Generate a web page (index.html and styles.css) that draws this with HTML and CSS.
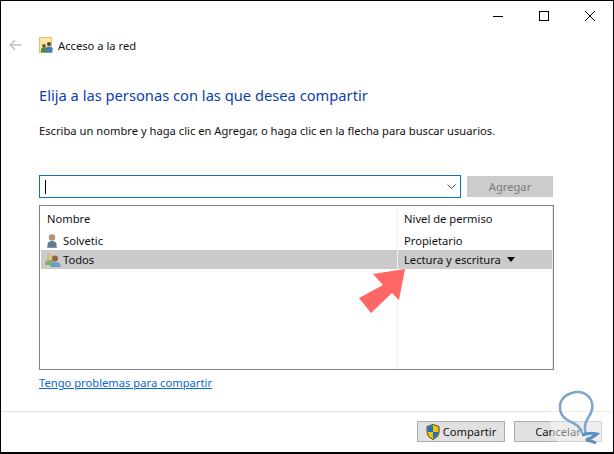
FILE: index.html
```html
<!DOCTYPE html>
<html lang="es">
<head>
<meta charset="utf-8">
<title>Acceso a la red</title>
<link rel="stylesheet" href="styles.css">
</head>
<body>
<div class="window">
  <div class="titlebar">
    <svg class="cap" width="12" height="12" viewBox="0 0 12 12"><path d="M1 6.500h10" stroke="#000" fill="none"/></svg>
    <svg class="cap" width="12" height="12" viewBox="0 0 12 12"><rect x="1.500" y="1.500" width="9" height="9" stroke="#000" fill="none"/></svg>
    <svg class="cap" width="12" height="12" viewBox="0 0 12 12"><path d="M1 1l10 10M11 1L1 11" stroke="#000" fill="none"/></svg>
  </div>
  <div class="nav">
    <svg class="back" width="13" height="12" viewBox="0 0 13 12"><path d="M12.500 6H1.500M6 1.200L1.200 6 6 10.800" stroke="#c4c4c4" stroke-width="1.600" fill="none"/></svg>
    <svg class="appicon" width="14" height="16" viewBox="0 0 14 16">
      <rect x=".5" y=".5" width="12" height="15" fill="#fbe8a6" stroke="#dcc074"/>
      <circle cx="5" cy="9" r="2" fill="#7a5a3a"/><path d="M2 15.500v-3q0-2 3-2t3 2v3z" fill="#4f8a4c"/>
      <circle cx="10" cy="7" r="2" fill="#5a3f2a"/><path d="M7 15.500v-4q0-2 3-2t3.500 2v4z" fill="#3f7fbf"/>
    </svg>
    <span class="navtitle">Acceso a la red</span>
  </div>
  <main class="content">
    <h1 class="heading">Elija a las personas con las que desea compartir</h1>
    <p class="intro">Escriba un nombre y haga clic en Agregar, o haga clic en la flecha para buscar usuarios.</p>
    <div class="addrow">
      <div class="combo">
        <span class="caret"></span>
        <svg class="chev" width="9" height="5" viewBox="0 0 9 5"><path d="M.5.500L4.500 4.500l4-4" stroke="#555" fill="none"/></svg>
      </div>
      <div class="addbtn">Agregar</div>
    </div>
    <div class="table">
      <div class="row head"><div class="c1">Nombre</div><div class="c2">Nivel de permiso</div></div>
      <div class="row user"><div class="c1">
        <svg class="uicon" width="14" height="16" viewBox="0 0 14 16"><circle cx="7" cy="4.500" r="3.200" fill="#b98f6c"/><path d="M2.500 14.500v-3q0-3.500 4.500-3.500t4.500 3.500v3z" fill="#5f7c96"/><path d="M2 14.500h10" stroke="#8f8f8f"/></svg>Solvetic</div><div class="c2">Propietario</div></div>
      <div class="row user sel"><div class="c1">
        <svg class="uicon wide" width="17" height="16" viewBox="0 0 17 16"><circle cx="5.500" cy="5" r="3.200" fill="#d9c08a"/><path d="M1 13v-2q0-3 4.500-3t4.500 3v2z" fill="#7fb06a"/><circle cx="11" cy="6.500" r="3" fill="#8f6448"/><path d="M6.500 15v-2q0-3 4.500-3t5.500 3v2z" fill="#6f9cc4"/></svg>Todos</div><div class="c2">Lectura y escritura<span class="tri"></span></div></div>
    </div>
    <a class="link" href="#">Tengo problemas para compartir</a>
  </main>
  <footer class="footer">
    <div class="btn share">
      <svg width="14" height="16" viewBox="0 0 14 16"><path d="M7 .5l6 2v6q0 4.500-6 7-6-2.500-6-7v-6z" fill="#f5c400" stroke="#444"/><path d="M7 1.500v6.500H1.700V3zM7 8h5.300q-.5 4-5.300 6.500z" fill="#1f6fc4"/></svg>
      Compartir
    </div>
    <div class="btn">Cancelar</div>
  </footer>
  <svg class="arrow" width="50" height="48" viewBox="0 0 50 48"><path d="M49 3L43 34 36 27 15 47 3 32 27 19 17 8z" fill="#ff6666"/></svg>
  <svg class="mark" width="64" height="70" viewBox="0 0 64 70"><circle cx="35" cy="32" r="35" fill="#fff" opacity=".45"/><path d="M36 46Q33 38 38 30 45 20 41 12 36 3 26 4 12 6 10 17 9 28 19 33 30 37 32 45" stroke="#7ea6cc" stroke-width="2.500" fill="none"/><path d="M32 47Q40 44 47 46 42 50 36 52 42 53 46 55" stroke="#5b8fc0" stroke-width="3" fill="none"/></svg>
</div>
</body>
</html>
```

FILE: styles.css
```css
* { box-sizing: border-box; }
html, body { margin: 0; padding: 0; }
body { width: 614px; height: 454px; overflow: hidden; background: #fff; font-family: "Noto Sans", "Open Sans", sans-serif; font-size: 11.2px; color: #111; }
.window { position: relative; width: 614px; height: 454px; border: 1px solid #000; border-width: 1px 1px 2px 1px; display: flex; flex-direction: column; background: #fff; overflow: hidden; }
.titlebar { height: 29px; display: flex; justify-content: flex-end; align-items: center; gap: 34px; padding: 0 17px 0 0; flex: none; }
.cap { display: block; }
.nav { height: 30px; display: flex; align-items: center; padding-left: 8px; flex: none; }
.back { margin-right: 17px; }
.appicon { margin-right: 5px; }
.content { flex: 1; padding: 0 59px 0 38px; display: flex; flex-direction: column; }
.heading { margin: 24px 0 0; font-weight: 400; font-size: 14.7px; line-height: 22px; color: #0a3fb0; }
.intro { margin: 17px 0 0; line-height: 16px; }
.addrow { display: flex; gap: 6px; margin-top: 36px; }
.combo { width: 422px; height: 23px; border: 1px solid #0f72bd; display: flex; align-items: center; justify-content: space-between; padding: 0 4px 0 5px; }
.caret { width: 1px; height: 14px; background: #000; }
.chev { display: block; }
.addbtn { width: 86px; height: 21px; margin-top: 1px; background: #ccc; color: #7b7b7b; display: flex; align-items: center; justify-content: center; }
.table { position: relative; margin-top: 7px; height: 165px; border: 1px solid #808088; padding: 1px 0 0 1px; }
.table::after { content: ""; position: absolute; top: 0; bottom: 0; left: 357px; width: 1px; background: #eef0f3; }
.table::before { content: ""; position: absolute; top: 0; bottom: 0; right: 0; width: 1px; background: #e9e9e9; }
.row { display: flex; height: 19px; align-items: center; }
.head { height: 22px; margin-bottom: 2px; }
.c1 { width: 356px; height: 100%; display: flex; align-items: center; padding-left: 6px; }
.c2 { height: 100%; display: flex; align-items: center; padding-left: 7px; }
.user .c1 { padding-left: 4px; }
.sel { background: #cbcbcb; width: 511px; }
.uicon { margin-right: 4px; }
.uicon.wide { margin-left: -1px; margin-right: 2px; }
.tri { width: 0; height: 0; margin-left: 6px; border: 4.500px solid transparent; border-top: 5px solid #000; border-bottom: 0; }
.link { margin-top: 5px; line-height: 16px; color: #0a66d6; align-self: flex-start; }
.footer { height: 41px; flex: none; border-top: 1px solid #dfdfdf; display: flex; justify-content: flex-end; gap: 9px; padding: 9px 11px 0 0; }
.btn { width: 88px; height: 21px; background: #e1e1e1; border: 1px solid #adadad; display: flex; align-items: center; justify-content: center; gap: 3px; }
.share svg { flex: none; }
.arrow { position: absolute; left: 355px; top: 265px; }
.mark { position: absolute; left: 549px; top: 387px; }
```
